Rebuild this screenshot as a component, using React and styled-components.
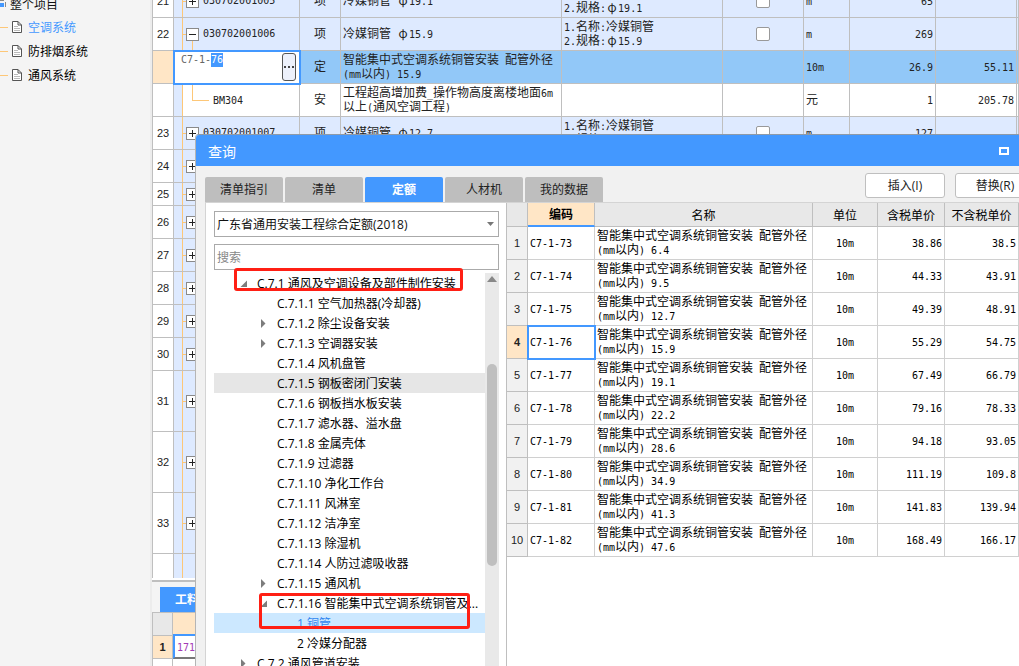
import React, { useEffect, useRef } from "react";
import styled, { createGlobalStyle, css } from "styled-components";

const BLUE = "#4398ff";
const PEACH = "#ffe6c6";
const ORANGE = "#fdc778";
const LINE = "#bfbfbf";
const SKY = "#deeaff";

const Global = createGlobalStyle`
  * { box-sizing: border-box; }
  body {
    margin: 0;
    overflow: hidden;
    background: #f4f4f4;
    color: #111;
    font: 12px/20px "Open Sans", "Noto Sans CJK SC", sans-serif;
  }
  button, input, select { font: inherit; color: inherit; }
`;

const Page = styled.div`
  position: relative;
  display: flex;
  width: 100%;
  height: 100vh;
  overflow: hidden;
`;

/* ---------- project tree ---------- */
const Sidebar = styled.nav`
  flex: 0 0 152px;
  background: #f4f4f4;
  border-right: 2px solid #ececec;
  overflow: hidden;
`;
const ProjectRoot = styled.div`
  display: flex;
  align-items: flex-end;
  gap: 4px;
  height: 15px;
  line-height: 20px;
  svg { margin-bottom: 7px; }
`;
const ProjectItem = styled.a`
  display: flex;
  align-items: center;
  height: 24px;
  color: ${(p) => (p.$active ? BLUE : "#000")};
  text-decoration: none;
  &::before {
    content: "";
    width: 8px;
    height: 1px;
    margin-right: 4px;
    background: ${ORANGE};
  }
  svg { margin-right: 6px; }
  span { padding-top: 2px; }
`;

/* ---------- bill grid ---------- */
const Main = styled.main`
  flex: 1;
  min-width: 0;
  display: flex;
  flex-direction: column;
`;
const GridView = styled.div`
  flex: 1;
  min-height: 0;
  overflow: hidden;
  background: #fff;
`;
const Table = styled.table`
  width: 100%;
  table-layout: fixed;
  border-collapse: separate;
  border-spacing: 0;
  line-height: 14px;
  color: ${(p) => p.$ink || "#222"};
`;
const BillTable = styled(Table)`
  margin-top: -15px;
  border-left: 1px solid ${LINE};
`;
const Tr = styled.tr`
  height: ${(p) => p.$h || 33}px;
  background: ${(p) => p.$bg || "#fff"};
`;
const Td = styled.td`
  padding: 0 ${(p) => p.$pad || 2}px;
  border-right: 1px solid ${(p) => p.$line || LINE};
  border-bottom: 1px solid ${(p) => p.$line || LINE};
  text-align: ${(p) => p.$align || "left"};
  vertical-align: middle;
  white-space: pre-wrap;
  overflow: hidden;
`;
const RowNo = styled.th`
  padding: 0;
  border-right: 1px solid ${LINE};
  border-bottom: 1px solid ${LINE};
  background: ${(p) => (p.$current ? PEACH : p.$bg || "#fff")};
  font: ${(p) => (p.$current ? "bold" : "normal")} 11px/14px "Liberation Sans", sans-serif;
  color: #222;
  text-align: center;
`;
const fill = (c) => `linear-gradient(${c}, ${c})`;
const branches = {
  closed: css`
    background: ${fill(ORANGE)} 8px 0 / 1px 100% no-repeat, ${fill(ORANGE)} 9px 50% / 4px 1px no-repeat;
  `,
  open: css`
    background: ${fill(ORANGE)} 8px 0 / 1px 100% no-repeat, ${fill(ORANGE)} 9px 50% / 4px 1px no-repeat,
      ${fill(ORANGE)} 18px 100% / 1px 50% no-repeat;
  `,
  leaf: css`
    background: ${fill(ORANGE)} 8px 0 / 1px 100% no-repeat, ${fill(ORANGE)} 18px 0 / 1px 50% no-repeat,
      ${fill(ORANGE)} 18px 50% / 17px 1px no-repeat, ${fill(SKY)} 0 0 / 8px 100% no-repeat;
  `,
};
const CodeTd = styled(Td)`
  padding-left: ${(p) => (p.$branch === "leaf" ? 39 : 12)}px;
  ${(p) => branches[p.$branch]}
`;
const CodeLine = styled.div`
  display: flex;
  align-items: center;
  gap: 4px;
`;
const Toggle = styled.button`
  display: block;
  flex: none;
  width: 13px;
  height: 13px;
  padding: 0;
  border: 1px solid #8a8a8a;
  background: #fff;
  svg { display: block; }
`;
const Latin = styled.span`
  font-family: "DejaVu Sans Mono", monospace;
  font-size: 10px;
  line-height: 10px;
`;
const Phi = styled.span`
  display: inline-block;
  width: 12px;
  font-family: "Noto Sans CJK SC", sans-serif;
  line-height: 12px;
  text-align: center;
`;
const Tick = styled.input`
  appearance: none;
  display: block;
  width: 14px;
  height: 14px;
  margin: 0 auto;
  border: 1px solid #999;
  border-radius: 2px;
  background: #fff;
`;
const EditTd = styled(Td)`
  position: relative;
  padding: 0;
  background: #fff;
  outline: 2px solid ${BLUE};
  outline-offset: -1px;
`;
const Editor = styled.div`
  display: flex;
  height: 32px;
  padding: 2px 3px 2px 7px;
`;
const CodeInput = styled.input`
  flex: 1;
  min-width: 0;
  height: 14px;
  padding: 0;
  border: 0;
  outline: 0;
  background: transparent;
  color: #666;
  caret-color: transparent;
  font: 10px/14px "DejaVu Sans Mono", monospace;
  &::selection { background: ${BLUE}; color: #fff; }
`;
const More = styled.button`
  display: flex;
  align-items: center;
  justify-content: center;
  gap: 2px;
  width: 14px;
  height: 28px;
  padding: 0;
  border: 1px solid #555;
  border-radius: 3px;
  background: #edf1fb;
  i { width: 2px; height: 2px; background: #444; }
`;

/* ---------- bottom detail panel ---------- */
const Detail = styled.section`
  flex: 0 0 88px;
  overflow: hidden;
  background: #f4f4f4;
  border-top: 2px solid #fff;
`;
const DetailTabs = styled.div`
  height: 32px;
  padding: 5px 0 0 8px;
  border-top: 2px solid ${LINE};
`;
const DetailTab = styled.button`
  width: 90px;
  height: 25px;
  padding: 0 0 0 15px;
  border: 0;
  background: ${BLUE};
  color: #fff;
  font-weight: bold;
  text-align: left;
`;
const DetailTable = styled(Table)`
  border-left: 1px solid ${LINE};
  border-top: 1px solid ${LINE};
  background: #fff;
`;
const DetailHead = styled.th`
  border-right: 1px solid ${LINE};
  border-bottom: ${(p) => (p.$current ? `2px solid ${BLUE}` : `1px solid ${LINE}`)};
  background: ${(p) => (p.$current ? PEACH : "#e8e8e8")};
`;
const DetailCode = styled(Td)`
  border-left: 2px solid ${BLUE};
  border-bottom: 2px solid #777;
  color: #a33bb5;
`;

/* ---------- query window ---------- */
const Dialog = styled.section`
  position: absolute;
  inset: 134px 0 0 195px;
  display: flex;
  flex-direction: column;
  overflow: hidden;
  border-top: 1px solid #8e9aa8;
  border-left: 1px solid #b5b5b5;
  border-top-left-radius: 4px;
  background: #f1f1f1;
`;
const TitleBar = styled.header`
  display: flex;
  align-items: center;
  justify-content: space-between;
  flex: 0 0 31px;
  padding: 0 10px 0 12px;
  background: ${BLUE};
  color: #fff;
  h1 { margin: 0; padding-top: 2px; font-size: 14px; font-weight: normal; line-height: 29px; }
`;
const Maximize = styled.button`
  width: 10px;
  height: 8px;
  padding: 0;
  border: 2px solid #fff;
  background: transparent;
`;
const Toolbar = styled.div`
  display: flex;
  flex: 0 0 36px;
  align-items: flex-end;
  padding-left: 9px;
`;
const Tabs = styled.div`
  display: flex;
  gap: 2px;
`;
const Tab = styled.button`
  width: 78px;
  height: 25px;
  padding: 0;
  border: 0;
  border-radius: 2px 2px 0 0;
  background: ${(p) => (p.$active ? BLUE : "#bebebe")};
  color: ${(p) => (p.$active ? "#fff" : "#222")};
  font-weight: ${(p) => (p.$active ? "bold" : "normal")};
`;
const Actions = styled.div`
  display: flex;
  gap: 10px;
  margin: 0 -16px 4px auto;
`;
const Action = styled.button`
  width: 80px;
  height: 25px;
  padding: 0;
  border: 1px solid ${LINE};
  border-radius: 3px;
  background: #fff;
  color: #222;
`;
const Body = styled.div`
  display: flex;
  flex: 1;
  min-height: 0;
  margin-left: 9px;
  border-top: 1px solid #d4d4d4;
  border-left: 1px solid #d4d4d4;
  background: #fff;
`;
const Picker = styled.aside`
  display: flex;
  flex-direction: column;
  flex: 0 0 300px;
  padding: 8px 7px 0 8px;
`;
const SelectBox = styled.label`
  display: flex;
  align-items: center;
  flex: 0 0 26px;
  padding-right: 4px;
  border: 1px solid #aaa;
  select {
    flex: 1;
    height: 24px;
    padding: 2px 2px 0;
    border: 0;
    appearance: none;
    background: transparent;
  }
`;
const Search = styled.input`
  flex: 0 0 26px;
  margin: 7px 0 3px;
  padding: 2px 2px 0;
  border: 1px solid #aaa;
  &::placeholder { color: #888; opacity: 1; }
`;
const TreeView = styled.div`
  display: flex;
  flex: 1;
  min-height: 0;
`;
const Tree = styled.ul`
  position: relative;
  flex: 1;
  min-width: 0;
  margin: 0;
  padding: 0;
  list-style: none;
`;
const Node = styled.li`
  display: flex;
  align-items: center;
  height: 20px;
  padding-left: ${(p) => 23 + p.$level * 20}px;
  background: ${(p) => (p.$selected ? "#cce8ff" : p.$hover ? "#e6e6e6" : "transparent")};
  color: ${(p) => (p.$selected ? "#2f86f0" : "#000")};
  white-space: nowrap;
  svg { flex: none; width: 20px; height: 20px; }
  span { padding-top: 2px; }
`;
const Blank = styled.i`
  flex: 0 0 20px;
`;
const Mark = styled.div`
  position: absolute;
  left: ${(p) => p.$left}px;
  top: ${(p) => p.$top}px;
  width: ${(p) => p.$width}px;
  height: ${(p) => p.$height}px;
  border: 3px solid #ff1f14;
  border-radius: 3px;
  pointer-events: none;
`;
const Scroll = styled.div`
  flex: 0 0 14px;
  display: flex;
  flex-direction: column;
  align-items: center;
  background: #e9e9e9;
  svg { margin-top: 3px; }
`;
const Thumb = styled.div`
  width: 10px;
  height: 202px;
  margin-top: 82px;
  border-radius: 5px;
  background: #bfbfbf;
`;
const Results = styled.div`
  flex: 1;
  min-width: 0;
  border-left: 1px solid ${LINE};
`;
const Th = styled.th`
  padding: 2px 0 0;
  border-right: 1px solid ${LINE};
  border-bottom: ${(p) => (p.$current ? `2px solid ${BLUE}` : `1px solid ${LINE}`)};
  background: ${(p) => (p.$current ? PEACH : "#e8e8e8")};
  font-weight: ${(p) => (p.$current ? "bold" : "normal")};
`;
const CodeCell = styled(Td)`
  ${(p) => p.$current && css`outline: 2px solid ${BLUE}; outline-offset: -1px;`}
`;

/* Latin runs use a half-width monospaced face beside the full-width Chinese one. */
function Text({ children }) {
  return String(children)
    .split(/([\x20-\x7e]+|φ)/)
    .map((part, i) =>
      part === "φ" ? <Phi key={i}>φ</Phi> : i % 2 ? <Latin key={i}>{part}</Latin> : part
    );
}

function Expander({ open }) {
  return (
    <Toggle aria-label={open ? "收起" : "展开"}>
      <svg width="11" height="11" stroke="#222" shapeRendering="crispEdges">
        <path d={open ? "M2 5.5h7" : "M2 5.5h7M5.5 2v7"} />
      </svg>
    </Toggle>
  );
}

function DocIcon() {
  return (
    <svg width="10" height="12" viewBox="0 0 10 12" fill="none" stroke="#555">
      <path d="M.5.5h5.500l3.500 3.500v7.500h-9z" fill="#fff" />
      <path d="M6 .5v3.500h3.500" />
      <path d="M2 5.500h4M2 7.500h6M2 9.500h6" stroke="#bbb" />
    </svg>
  );
}

const bills = [
  { no: 21, code: "030702001005", name: "冷媒铜管 φ19.1", desc: "1.名称:冷媒铜管\n2.规格:φ19.1", qty: "65" },
  { no: 22, code: "030702001006", name: "冷媒铜管 φ15.9", desc: "1.名称:冷媒铜管\n2.规格:φ15.9", qty: "269", open: true },
];
const nextBill = { no: 23, code: "030702001007", name: "冷媒铜管 φ12.7", desc: "1.名称:冷媒铜管\n2.规格:φ12.7", qty: "127" };
const laterRows = [[24, 33], [25, 23], [26, 33], [27, 33], [28, 33], [29, 33], [30, 33], [31, 61], [32, 61], [33, 61], ["", 61]];

function BillRow({ row }) {
  return (
    <Tr $bg={SKY}>
      <RowNo>{row.no}</RowNo>
      <CodeTd $branch={row.open ? "open" : "closed"}>
        <CodeLine><Expander open={row.open} /><Text>{row.code}</Text></CodeLine>
      </CodeTd>
      <Td $align="center">项</Td>
      <Td><Text>{row.name}</Text></Td>
      <Td><Text>{row.desc}</Text></Td>
      <Td><Tick type="checkbox" aria-label={`选择 ${row.code}`} /></Td>
      <Td><Text>m</Text></Td>
      <Td $align="right"><Text>{row.qty}</Text></Td>
      <Td />
      <Td />
    </Tr>
  );
}

function BillGrid() {
  const input = useRef(null);
  useEffect(() => {
    input.current.focus();
    input.current.setSelectionRange(5, 7);
  }, []);
  return (
    <BillTable>
      <colgroup>
        {[21, 126, 41, 221, 161, 81, 46, 86, 81].map((w, i) => <col key={i} style={{ width: w }} />)}
        <col />
      </colgroup>
      <tbody>
        {bills.map((r) => <BillRow key={r.no} row={r} />)}
        <Tr $bg="#92c8f8">
          <RowNo $current />
          <EditTd>
            <Editor>
              <CodeInput ref={input} aria-label="编码" defaultValue="C7-1-76" />
              <More aria-label="更多"><i /><i /><i /></More>
            </Editor>
          </EditTd>
          <Td $align="center">定</Td>
          <Td><Text>{"智能集中式空调系统铜管安装 配管外径\n(mm以内) 15.9"}</Text></Td>
          <Td /><Td />
          <Td><Text>10m</Text></Td>
          <Td $align="right"><Text>26.9</Text></Td>
          <Td $align="right"><Text>55.11</Text></Td>
          <Td />
        </Tr>
        <Tr>
          <RowNo />
          <CodeTd $branch="leaf"><Text>BM304</Text></CodeTd>
          <Td $align="center">安</Td>
          <Td><Text>{"工程超高增加费_操作物高度离楼地面6m\n以上(通风空调工程)"}</Text></Td>
          <Td /><Td />
          <Td>元</Td>
          <Td $align="right"><Text>1</Text></Td>
          <Td $align="right"><Text>205.78</Text></Td>
          <Td />
        </Tr>
        <BillRow row={nextBill} />
        {laterRows.map(([no, h]) => (
          <Tr key={no} $h={h} $bg={SKY}>
            <RowNo>{no}</RowNo>
            <CodeTd $branch="closed"><Expander /></CodeTd>
            <Td colSpan={8} />
          </Tr>
        ))}
      </tbody>
    </BillTable>
  );
}

const nodes = [
  [0, "C.7.1 通风及空调设备及部件制作安装", "open"],
  [1, "C.7.1.1 空气加热器(冷却器)"],
  [1, "C.7.1.2 除尘设备安装", "closed"],
  [1, "C.7.1.3 空调器安装", "closed"],
  [1, "C.7.1.4 风机盘管"],
  [1, "C.7.1.5 钢板密闭门安装", "", "hover"],
  [1, "C.7.1.6 钢板挡水板安装"],
  [1, "C.7.1.7 滤水器、溢水盘"],
  [1, "C.7.1.8 金属壳体"],
  [1, "C.7.1.9 过滤器"],
  [1, "C.7.1.10 净化工作台"],
  [1, "C.7.1.11 风淋室"],
  [1, "C.7.1.12 洁净室"],
  [1, "C.7.1.13 除湿机"],
  [1, "C.7.1.14 人防过滤吸收器"],
  [1, "C.7.1.15 通风机", "closed"],
  [1, "C.7.1.16 智能集中式空调系统铜管及...", "open"],
  [2, "1 铜管", "", "selected"],
  [2, "2 冷媒分配器"],
  [0, "C.7.2 通风管道安装", "closed"],
];

function Arrow({ state }) {
  if (!state) return <Blank />;
  return (
    <svg viewBox="0 0 20 20" fill="#7d7d7d">
      <path d={state === "open" ? "M10 7.500v6.500H3.500z" : "M4 6l4.500 4.500L4 15z"} />
    </svg>
  );
}

const results = [
  ["C7-1-73", "6.4", "38.86", "38.5"],
  ["C7-1-74", "9.5", "44.33", "43.91"],
  ["C7-1-75", "12.7", "49.39", "48.91"],
  ["C7-1-76", "15.9", "55.29", "54.75"],
  ["C7-1-77", "19.1", "67.49", "66.79"],
  ["C7-1-78", "22.2", "79.16", "78.33"],
  ["C7-1-79", "28.6", "94.18", "93.05"],
  ["C7-1-80", "34.9", "111.19", "109.8"],
  ["C7-1-81", "41.3", "141.83", "139.94"],
  ["C7-1-82", "47.6", "168.49", "166.17"],
];

function QueryDialog() {
  return (
    <Dialog role="dialog" aria-label="查询">
      <TitleBar>
        <h1>查询</h1>
        <Maximize aria-label="最大化" />
      </TitleBar>
      <Toolbar>
        <Tabs>
          {["清单指引", "清单", "定额", "人材机", "我的数据"].map((t) => (
            <Tab key={t} $active={t === "定额"}>{t}</Tab>
          ))}
        </Tabs>
        <Actions>
          <Action>插入(I)</Action>
          <Action>替换(R)</Action>
        </Actions>
      </Toolbar>
      <Body>
        <Picker>
          <SelectBox>
            <select aria-label="定额库"><option>广东省通用安装工程综合定额(2018)</option></select>
            <svg width="7" height="4" fill="#777"><path d="M0 0h7L3.500 4z" /></svg>
          </SelectBox>
          <Search placeholder="搜索" aria-label="搜索" />
          <TreeView>
            <Tree>
              {nodes.map(([level, label, state, mood]) => (
                <Node key={label} $level={level} $hover={mood === "hover"} $selected={mood === "selected"}>
                  <Arrow state={state} /><span>{label}</span>
                </Node>
              ))}
              <Mark $left={20} $top={-5} $width={229} $height={23} />
              <Mark $left={45} $top={320} $width={211} $height={36} />
            </Tree>
            <Scroll>
              <svg width="10" height="6" fill="#888"><path d="M0 6l5-6 5 6z" /></svg>
              <Thumb />
            </Scroll>
          </TreeView>
        </Picker>
        <Results>
          <Table $ink="#000">
            <colgroup>
              {[21, 67, 218, 65, 67].map((w, i) => <col key={i} style={{ width: w }} />)}
              <col />
            </colgroup>
            <thead>
              <Tr $h={24}>
                <Th /><Th $current>编码</Th><Th>名称</Th><Th>单位</Th><Th>含税单价</Th><Th>不含税单价</Th>
              </Tr>
            </thead>
            <tbody>
              {results.map(([code, size, gross, net], i) => (
                <Tr key={code}>
                  <RowNo $bg="#f1f1f1" $current={i === 3}>{i + 1}</RowNo>
                  <CodeCell $line="#d0d0d0" $current={i === 3}><Text>{code}</Text></CodeCell>
                  <Td $line="#d0d0d0"><Text>{`智能集中式空调系统铜管安装 配管外径\n(mm以内) ${size}`}</Text></Td>
                  <Td $line="#d0d0d0" $align="center"><Text>10m</Text></Td>
                  <Td $line="#d0d0d0" $align="right"><Text>{gross}</Text></Td>
                  <Td $line="#d0d0d0" $align="right"><Text>{net}</Text></Td>
                </Tr>
              ))}
            </tbody>
          </Table>
        </Results>
      </Body>
    </Dialog>
  );
}

export default function App() {
  return (
    <Page>
      <Global />
      <Sidebar>
        <ProjectRoot>
          <svg width="6" height="8" shapeRendering="crispEdges">
            <path d="M0 0h4M5 2v5" stroke="#8a8a8a" />
            <path d="M0 3h4v4H0z" fill={BLUE} />
          </svg>
          整个项目
        </ProjectRoot>
        {["空调系统", "防排烟系统", "通风系统"].map((t, i) => (
          <ProjectItem key={t} href="#" $active={i === 0}><DocIcon /><span>{t}</span></ProjectItem>
        ))}
      </Sidebar>
      <Main>
        <GridView><BillGrid /></GridView>
        <Detail>
          <DetailTabs><DetailTab>工料机显示</DetailTab></DetailTabs>
          <DetailTable>
            <colgroup><col style={{ width: 20 }} /><col /></colgroup>
            <tbody>
              <Tr $h={23}><DetailHead /><DetailHead $current /></Tr>
              <Tr $h={23}>
                <RowNo $current>1</RowNo>
                <DetailCode><Text>1715</Text></DetailCode>
              </Tr>
              <Tr $h={23}><RowNo /><Td /></Tr>
            </tbody>
          </DetailTable>
        </Detail>
      </Main>
      <QueryDialog />
    </Page>
  );
}
